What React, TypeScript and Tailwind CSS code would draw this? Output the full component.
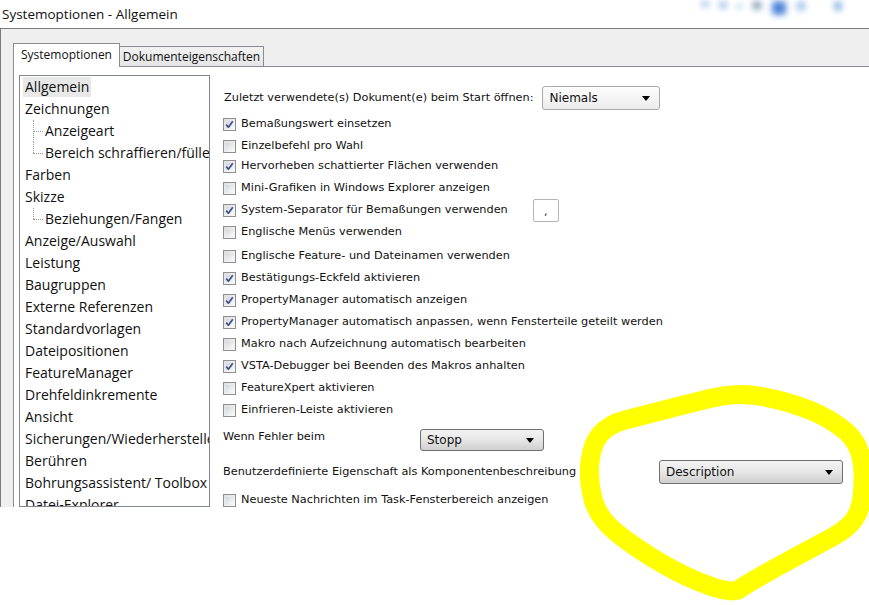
import clsx from "clsx";

const uiFont = { fontFamily: '"Open Sans", "Noto Sans", sans-serif' };
const dlgFont = { fontFamily: '"DejaVu Sans", "Liberation Sans", sans-serif' };

type Row = { label: string; checked?: boolean; top: string; extra?: "separator" };

const options: Row[] = [
  { label: "Bemaßungswert einsetzen", checked: true, top: "mt-[6px]" },
  { label: "Einzelbefehl pro Wahl", top: "mt-[2px]" },
  { label: "Hervorheben schattierter Flächen verwenden", checked: true, top: "mt-0" },
  { label: "Mini-Grafiken in Windows Explorer anzeigen", top: "mt-[2px]" },
  { label: "System-Separator für Bemaßungen verwenden", checked: true, top: "mt-[2px]", extra: "separator" },
  { label: "Englische Menüs verwenden", top: "mt-[2px]" },
  { label: "Englische Feature- und Dateinamen verwenden", top: "mt-[4px]" },
  { label: "Bestätigungs-Eckfeld aktivieren", checked: true, top: "mt-[2px]" },
  { label: "PropertyManager automatisch anzeigen", checked: true, top: "mt-[2px]" },
  { label: "PropertyManager automatisch anpassen, wenn Fensterteile geteilt werden", checked: true, top: "mt-[2px]" },
  { label: "Makro nach Aufzeichnung automatisch bearbeiten", top: "mt-[2px]" },
  { label: "VSTA-Debugger bei Beenden des Makros anhalten", checked: true, top: "mt-[2px]" },
  { label: "FeatureXpert aktivieren", top: "mt-[2px]" },
  { label: "Einfrieren-Leiste aktivieren", top: "mt-[2px]" },
];

const tree: { label: string; child?: boolean; last?: boolean; selected?: boolean }[] = [
  { label: "Allgemein", selected: true },
  { label: "Zeichnungen" },
  { label: "Anzeigeart", child: true },
  { label: "Bereich schraffieren/füllen", child: true, last: true },
  { label: "Farben" },
  { label: "Skizze" },
  { label: "Beziehungen/Fangen", child: true, last: true },
  { label: "Anzeige/Auswahl" },
  { label: "Leistung" },
  { label: "Baugruppen" },
  { label: "Externe Referenzen" },
  { label: "Standardvorlagen" },
  { label: "Dateipositionen" },
  { label: "FeatureManager" },
  { label: "Drehfeldinkremente" },
  { label: "Ansicht" },
  { label: "Sicherungen/Wiederherstellen" },
  { label: "Berühren" },
  { label: "Bohrungsassistent/ Toolbox" },
  { label: "Datei-Explorer" },
];

function CheckBox({ checked }: { checked?: boolean }) {
  return (
    <span className="relative flex h-[13px] w-[13px] shrink-0 items-center justify-center border border-[#8f8f8f] bg-linear-to-br from-[#dedede] to-[#fafafa]">
      <span className="absolute inset-[2px] bg-linear-to-br from-[#d2d7de] to-[#f7f8f9]" />
      {checked && (
        <svg viewBox="0 0 11 11" className="relative h-[11px] w-[11px]">
          <path d="M2.2 5.6 L4.4 8.2 L8.8 2.2" stroke="#3d4f8a" strokeWidth="1.7" fill="none" strokeLinejoin="round" />
        </svg>
      )}
    </span>
  );
}

function Combo({ label, className, light }: { label: string; className: string; light?: boolean }) {
  return (
    <div
      className={clsx(
        "flex shrink-0 items-center justify-between rounded-[3px] border pl-[6px] pr-[9px] text-[12px] text-[#111]",
        light
          ? "border-[#a9a9a9] bg-linear-to-b from-[#fdfdfd] to-[#ececec]"
          : "border-[#707070] bg-linear-to-b from-[#f3f3f3] via-[#e6e6e6] to-[#cfcfcf]",
        className
      )}
    >
      <span>{label}</span>
      <span className="h-0 w-0 border-x-[4px] border-t-[5px] border-x-transparent border-t-black" />
    </div>
  );
}

// hand-drawn yellow ring, smoothed through midpoints
function Highlight() {
  const pts = [
    [610, 424], [637, 417], [687, 404], [737, 392], [787, 401], [832, 419], [862, 446],
    [864, 497], [853, 526], [812, 548], [777, 567], [745, 585], [733, 594], [687, 578],
    [637, 549], [598, 518], [588, 480], [592, 443],
  ];
  const n = pts.length;
  const mid = (a: number[], b: number[]) => [(a[0] + b[0]) / 2, (a[1] + b[1]) / 2];
  const start = mid(pts[n - 1], pts[0]);
  let d = `M${start[0]} ${start[1]}`;
  for (let i = 0; i < n; i++) {
    const m = mid(pts[i], pts[(i + 1) % n]);
    d += ` Q${pts[i][0]} ${pts[i][1]} ${m[0]} ${m[1]}`;
  }
  return (
    <svg className="pointer-events-none absolute left-0 top-0 h-[605px] w-[869px]" viewBox="0 0 869 605">
      <path d={d} fill="none" stroke="#ffff00" strokeWidth="19" strokeLinejoin="round" />
    </svg>
  );
}

export default function App() {
  return (
    <div className="relative h-[605px] w-[869px] overflow-hidden bg-white">
      {/* title bar */}
      <div className="relative flex h-[28px] items-center pl-[2px] text-[13.5px] text-[#111]" style={uiFont}>
        Systemoptionen - Allgemein
        <div className="absolute right-0 top-0 flex h-[28px] w-[180px] items-start gap-[10px] pl-[12px] pt-[1px] blur-[3px]">
          <span className="h-[6px] w-[8px] rounded-full bg-[#9fc0ea]" />
          <span className="h-[8px] w-[8px] rounded-full bg-[#9fc0ea]" />
          <span className="mt-[3px] h-[5px] w-[5px] rounded-full bg-[#a8c6ec]" />
          <span className="h-[9px] w-[10px] rounded-full bg-[#8fa4b8]" />
          <span className="h-[14px] w-[14px] rounded-[3px] bg-[#4f86d8]" />
          <span className="h-[10px] w-[10px] rounded-full bg-[#a7c4ea]" />
          <span className="ml-[18px] h-[10px] w-[8px] rounded-full bg-[#8fb3e4]" />
        </div>
      </div>

      {/* dialog body */}
      <div className="flex h-[479px] flex-col border-l border-t border-[#7d7d7d] bg-[#efefef] pl-[12px] pt-[14px]">
        <div className="flex h-[24px] shrink-0 items-end text-[12px] text-[#111]" style={uiFont}>
          <div className="relative z-10 flex h-[24px] w-[107px] items-center justify-center border border-b-0 border-[#898c95] bg-white pb-[1px]">
            Systemoptionen
          </div>
          <div className="flex h-[21px] w-[144px] items-center justify-center border border-b-0 border-l-0 border-[#898c95] bg-linear-to-b from-[#f2f2f2] to-[#e4e4e4]">
            Dokumenteigenschaften
          </div>
        </div>
        <div className="-mt-px flex min-h-0 flex-1 gap-[13px] overflow-hidden border-l border-t border-[#898c95] bg-white pl-[5px] pt-[8px]">
          {/* tree */}
          <div className="w-[191px] shrink-0 overflow-hidden border border-[#828790] pl-[3px] text-[14px] text-[#111]" style={uiFont}>
            {tree.map((t) => (
              <div key={t.label} className="relative flex h-[22px] items-center whitespace-nowrap">
                {t.child && (
                  <>
                    <span
                      className={clsx(
                        "absolute left-[10px] top-0 border-l border-dotted border-[#9a9a9a]",
                        t.last ? "h-[11px]" : "h-[22px]"
                      )}
                    />
                    <span className="ml-[10px] w-[10px] shrink-0 border-t border-dotted border-[#9a9a9a]" />
                  </>
                )}
                <span className={clsx("shrink-0 px-[2px] leading-[20px]", t.selected && "bg-[#e8e8e8]")}>{t.label}</span>
              </div>
            ))}
          </div>

          {/* options */}
          <div className="flex min-w-0 flex-1 flex-col pt-[13px] text-[11.3px] text-[#111]" style={dlgFont}>
            <div className="flex h-[20px] shrink-0 items-center">
              <span className="ml-px whitespace-nowrap">Zuletzt verwendete(s) Dokument(e) beim Start öffnen:</span>
              <Combo label="Niemals" light className="ml-[9px] h-[24px] w-[118px]" />
            </div>
            {options.map((o) => (
              <div key={o.label} className={clsx("flex h-[20px] shrink-0 items-center gap-[5px]", o.top)}>
                <CheckBox checked={o.checked} />
                <span className="whitespace-nowrap">{o.label}</span>
                {o.extra === "separator" && (
                  <span className="ml-[20px] flex h-[23px] w-[26px] shrink-0 items-center justify-center rounded-[2px] border border-[#b5b5b5] bg-white pt-[4px] text-[11px]">
                    ,
                  </span>
                )}
              </div>
            ))}
            <div className="mt-[7px] flex h-[24px] shrink-0 items-start">
              <span className="w-[197px] shrink-0 leading-[20px]">Wenn Fehler beim</span>
              <Combo label="Stopp" className="mt-[2px] h-[22px] w-[124px]" />
            </div>
            <div className="mt-[11px] flex h-[20px] shrink-0 items-center">
              <span className="w-[436px] shrink-0 whitespace-nowrap">Benutzerdefinierte Eigenschaft als Komponentenbeschreibung</span>
              <Combo label="Description" className="h-[24px] w-[184px]" />
            </div>
            <div className="mt-[8px] flex h-[20px] shrink-0 items-center gap-[5px]">
              <CheckBox />
              <span className="whitespace-nowrap">Neueste Nachrichten im Task-Fensterbereich anzeigen</span>
            </div>
          </div>
        </div>
      </div>

      <Highlight />
    </div>
  );
}
